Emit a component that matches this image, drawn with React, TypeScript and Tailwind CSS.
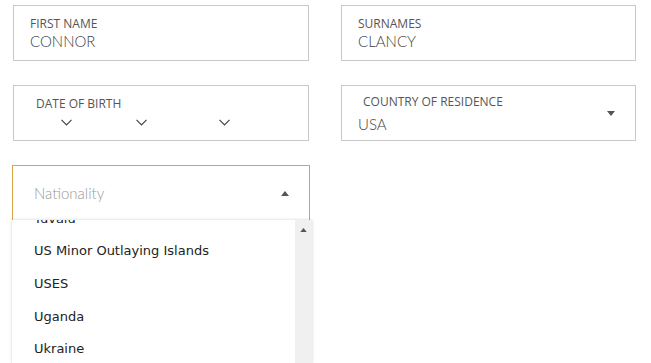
import { ReactNode } from "react";

const countries = ["Tuvalu", "US Minor Outlaying Islands", "USES", "Uganda", "Ukraine"];

function Field({ label, children, className = "" }: { label: string; children?: ReactNode; className?: string }) {
  return (
    <div className={`relative h-[56px] border border-[#c9c9c9] bg-white ${className}`}>
      <div className="text-[12px] leading-none text-[#555]">{label}</div>
      {children}
    </div>
  );
}

function Caret({ up = false, className = "" }: { up?: boolean; className?: string }) {
  return (
    <svg width="8" height="5" viewBox="0 0 8 5" className={className}>
      {up ? <path d="M0 5 L4 0 L8 5 Z" fill="#555" /> : <path d="M0 0 L8 0 L4 5 Z" fill="#555" />}
    </svg>
  );
}

function Chevron() {
  return (
    <svg width="11" height="7" viewBox="0 0 11 7">
      <path d="M0.5 0.8 L5.5 5.8 L10.5 0.8" fill="none" stroke="#444" strokeWidth="1.2" />
    </svg>
  );
}

export default function App() {
  return (
    <main className="h-[363px] w-[651px] overflow-hidden bg-white pl-[13px] pr-[16px] pt-[5px] font-['Open_Sans',sans-serif]">
      <div className="grid grid-cols-[296px_295px] gap-x-[32px] gap-y-[24px]">
        <Field label="FIRST NAME" className="pl-[16px] pt-[12px]">
          <div className="mt-[4px] font-['Lato',sans-serif] text-[15px] font-light leading-none text-[#3f3f3f]">CONNOR</div>
        </Field>
        <Field label="SURNAMES" className="pl-[16px] pt-[12px]">
          <div className="mt-[4px] font-['Lato',sans-serif] text-[15px] font-light leading-none text-[#3f3f3f]">CLANCY</div>
        </Field>

        <Field label="DATE OF BIRTH" className="pl-[22px] pt-[12px]">
          <div className="mt-[9px] flex items-center">
            <div className="ml-[25px]"><Chevron /></div>
            <div className="ml-[64px]"><Chevron /></div>
            <div className="ml-[72px]"><Chevron /></div>
          </div>
        </Field>
        <Field label="COUNTRY OF RESIDENCE" className="pl-[21px] pt-[10px]">
          <div className="-ml-[5px] mt-[9px] font-['Lato',sans-serif] text-[15px] font-light leading-none text-[#3f3f3f]">USA</div>
          <Caret className="absolute right-[20px] top-[25px]" />
        </Field>

        <div className="relative -ml-px">
          <div className="flex h-[56px] w-[298px] items-center border border-[#dba04a] bg-white pl-[21px] pr-[20px]">
            <span className="flex-1 font-['Lato',sans-serif] text-[15px] font-light text-[#9a9a9a]">Nationality</span>
            <Caret up />
          </div>
          <div className="absolute left-0 top-[55px] z-10 flex h-[144px] w-[300px] overflow-hidden bg-white shadow-[0_0_3px_rgba(0,0,0,0.18)]">
            <div className="flex-1 overflow-hidden">
              <div className="-mt-[18px] font-['DejaVu_Sans',sans-serif] text-[13px] text-[#222]">
                {countries.map((c) => (
                  <div key={c} className="flex h-[32.7px] items-center pl-[22px]">{c}</div>
                ))}
              </div>
            </div>
            <div className="flex w-[17px] justify-center bg-[#f0f0f0] pt-[8px]">
              <Caret up className="h-[4px] w-[7px]" />
            </div>
          </div>
        </div>
      </div>
    </main>
  );
}
